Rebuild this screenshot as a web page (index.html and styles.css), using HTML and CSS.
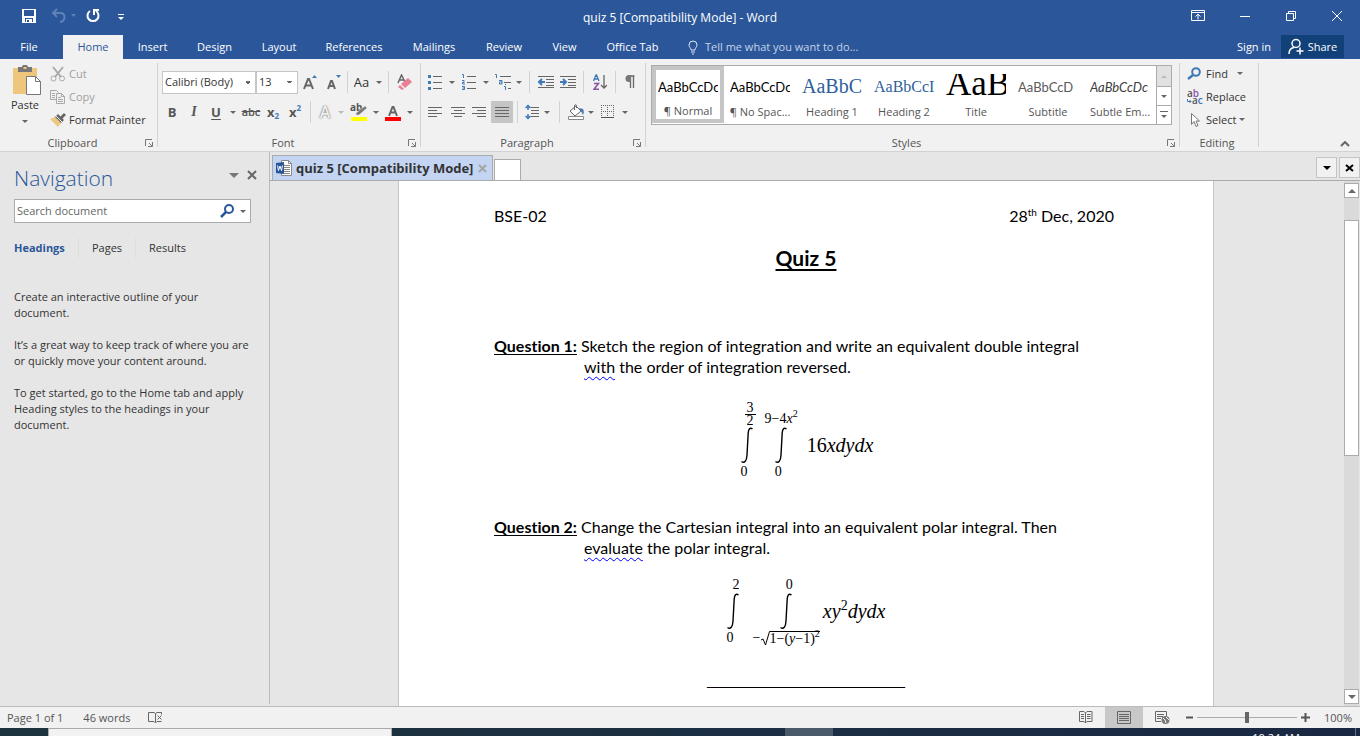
FILE: index.html
```html
<!DOCTYPE html>
<html lang="en">
<head>
<meta charset="utf-8">
<title>quiz 5 [Compatibility Mode] - Word</title>
<link rel="stylesheet" href="styles.css">
</head>
<body>
<header class="chrome">
  <div class="titlebar">
    <div class="quick">
      <button aria-label="Save"><svg width="16" height="16" viewBox="0 0 16 16"><path fill="#fff" fill-rule="evenodd" d="M1 1h14v14H1zM3 2v6h10V2zM4 10v4h1v-3h6v3h1v-4zM6 12v2h2v-2z"/></svg></button>
      <button class="faded" aria-label="Undo"><svg width="26" height="16" viewBox="0 0 26 16"><path d="M6 1 2 5l4 4M2 5h7c6 0 6 8 0 9" fill="none" stroke="#5f82b8" stroke-width="2"/><path d="M20 6h5l-2.500 3z" fill="#5f82b8"/></svg></button>
      <button aria-label="Repeat"><svg width="16" height="16" viewBox="0 0 16 16"><path d="M5 3a5.500 5.500 0 1 0 6 0M9 7V2h5" fill="none" stroke="#fff" stroke-width="2"/></svg></button>
      <button aria-label="Customize"><svg width="8" height="10" viewBox="0 0 8 10"><path d="M1 3.500h6" stroke="#fff"/><path d="M1 6h6L4 9z" fill="#fff"/></svg></button>
    </div>
    <h1 class="doc-title">quiz 5 [Compatibility Mode] - Word</h1>
    <div class="window-controls">
      <button aria-label="Ribbon display options"><svg width="14" height="12" viewBox="0 0 14 12"><path d="M.5.500h13v10H.500zM.500 2.500h13M7 9.500v-5M4.500 6.500 7 4.200l2.500 2.300" fill="none" stroke="#fff"/></svg></button>
      <button aria-label="Minimize"><svg width="12" height="12"><path d="M1 6.500h10" stroke="#fff"/></svg></button>
      <button aria-label="Restore"><svg width="12" height="12"><path d="M1.500 3.500h7v7h-7zM3.500 3.500v-2h7v7h-2" fill="none" stroke="#fff"/></svg></button>
      <button aria-label="Close"><svg width="12" height="12"><path d="m1 1 10 10M11 1 1 11" stroke="#fff"/></svg></button>
    </div>
  </div>
  <div class="menu">
    <nav class="tabs">
      <button class="file">File</button><button class="active">Home</button><button>Insert</button><button>Design</button><button>Layout</button><button>References</button><button>Mailings</button><button>Review</button><button>View</button><button>Office Tab</button>
    </nav>
    <button class="tell"><svg width="10" height="15" viewBox="0 0 10 15"><path d="M3 10c0-2-2-3-2-5a4 4 0 0 1 8 0c0 2-2 3-2 5zM3 12h4M4 14h2" fill="none" stroke="#dce5f2"/></svg>Tell me what you want to do...</button>
    <button class="sign">Sign in</button>
    <button class="share"><svg width="16" height="17" viewBox="0 0 16 17"><circle cx="8" cy="5.500" r="4" fill="none" stroke="#fff" stroke-width="1.500"/><path d="M1 16c0-4 2-6 5-6.500M8.500 13h7M12 9.500v7" fill="none" stroke="#fff" stroke-width="1.500"/></svg>Share</button>
  </div>
</header>

<section class="ribbon">
  <div class="group clipboard">
    <div class="clip-body">
      <button class="paste"><svg width="30" height="32" viewBox="0 0 30 32"><path d="M1 3h24v26H1z" fill="#eec67c"/><path d="M6 2h4c0-3 6-3 6 0h4v5H6z" fill="#777"/><path d="M11.500 2h3v2h-3z" fill="#eec67c"/><path d="M14.500 11.500h9l5 5v13h-14z" fill="#fff" stroke="#777"/><path d="M23.500 11.500v5h5" fill="none" stroke="#777"/></svg><span>Paste</span><i class="arrow"></i></button>
      <div class="clip-list">
        <button class="off"><svg width="16" height="16" viewBox="0 0 16 16"><path d="m3 1 8 10M13 1 5 11" stroke="#a9a9a9" stroke-width="2"/><circle cx="3.500" cy="12.500" r="2.500" fill="none" stroke="#a9a9a9"/><circle cx="12" cy="12.500" r="2.500" fill="none" stroke="#a9a9a9"/></svg>Cut</button>
        <button class="off"><svg width="16" height="16" viewBox="0 0 16 16"><path d="M6 10.500H.500v-9h6l2 2M2 4.500h3M2 6.500h3M2 8.500h3M6.500 4.500h5l3 3v7h-8zM11.500 4.500v3h3M8 8.500h3M8 10.500h5M8 12.500h5" fill="none" stroke="#a9a9a9"/></svg>Copy</button>
        <button><svg width="16" height="16" viewBox="0 0 16 16"><path d="m0 7 5-2 6 6-3 4z" fill="#eec67c"/><path d="m5 5 3-3 6 6-3 3z" fill="#666"/><path d="m10 5 4-4 2 2-4 4z" fill="#666"/><path d="m6 4 6 6" stroke="#f1f1f1"/></svg>Format Painter</button>
      </div>
    </div>
    <div class="caption">Clipboard<button class="launch" aria-label="Clipboard settings"><svg width="8" height="8"><path d="M.500 7V.500H7M4 4l3 3M7.500 3v4.500H3" fill="none" stroke="#777"/></svg></button></div>
  </div>

  <div class="group font">
    <div class="rows">
      <div class="row font-one">
        <select aria-label="Font"><option>Calibri (Body)</option></select>
        <select class="size" aria-label="Font size"><option>13</option></select>
        <button aria-label="Grow font"><svg width="14" height="16" viewBox="0 0 14 16"><path d="m1 15 4-10h1l4 10M2.500 11.500h6" fill="none" stroke="#666" stroke-width="2"/><path d="M9 4h5l-2.500-3z" fill="#3f7ab5"/></svg></button>
        <button aria-label="Shrink font"><svg width="14" height="16" viewBox="0 0 14 16"><path d="m1 15 3-8h1l3 8M2.500 12h5" fill="none" stroke="#666" stroke-width="2"/><path d="M9 1h5l-2.500 3z" fill="#3f7ab5"/></svg></button>
        <hr>
        <button class="case">Aa<i class="arrow"></i></button>
        <hr>
        <button aria-label="Clear formatting"><svg width="16" height="16" viewBox="0 0 16 16"><path d="m1 9 3.500-8L8 8M2 6h5" fill="none" stroke="#666" stroke-width="1.500"/><path d="m4 10 7-6 4 4-7 6z" fill="#e87f92"/><path d="m3 11 4 4-2 1-4-3z" fill="#e87f92"/></svg></button>
      </div>
      <div class="row font-two">
        <button class="b">B</button><button class="i">I</button><button class="u">U</button><button aria-label="Underline style"><i class="arrow"></i></button>
        <button class="strike">abc</button><button class="script">x<sub>2</sub></button><button class="script">x<sup>2</sup></button><hr>
        <button class="effects">A</button><button aria-label="Effects"><i class="arrow pale"></i></button>
        <button class="highlight" aria-label="Highlight"><svg width="18" height="18" viewBox="0 0 18 18"><text x="0" y="8" font-family="Open Sans" font-size="10" font-weight="700" fill="#555">ab</text><path d="m15 3 2 2-8 7H6v-2z" fill="#777" stroke="#eee" stroke-width=".5"/><path d="M1 14h16v4H1z" fill="#ff0"/></svg></button><button aria-label="Highlight colour"><i class="arrow"></i></button>
        <button aria-label="Font colour"><svg width="18" height="18" viewBox="0 0 18 18"><path d="m5 13 3.500-9h1L13 13M6.500 9.500h5" fill="none" stroke="#666" stroke-width="2"/><path d="M1 14h16v4H1z" fill="red"/></svg></button><button aria-label="Pick font colour"><i class="arrow"></i></button>
      </div>
    </div>
    <div class="caption">Font<button class="launch" aria-label="Font settings"><svg width="8" height="8"><path d="M.500 7V.500H7M4 4l3 3M7.500 3v4.500H3" fill="none" stroke="#777"/></svg></button></div>
  </div>

  <div class="group paragraph">
    <div class="rows">
      <div class="row para-one">
        <button aria-label="Bullets"><svg width="14" height="16"><path d="M5 2.500h9M5 8.500h9M5 14.500h9" stroke="#666"/><path d="M0 1h3v3H0zM0 7h3v3H0zM0 13h3v3H0z" fill="#3f7ab5"/></svg></button><button aria-label="Bullet style"><i class="arrow"></i></button>
        <button aria-label="Numbering"><svg width="16" height="16"><path d="M6 2.500h9M6 8.500h9M6 14.500h9" stroke="#666"/><path d="M1 .500h1.500V4M1 6.500h2v2H1.500v1.500H4M1 12.500h2.500v3H1M1.500 14h2" fill="none" stroke="#3f7ab5"/></svg></button><button aria-label="Number style"><i class="arrow"></i></button>
        <button aria-label="Multilevel list"><svg width="16" height="16"><path d="M5 2.500h11M9 8.500h7M13 14.500h3" stroke="#666"/><path d="M0 .500h1.500V4M4 6.500h3V10H4.500V8H7M10.500 10v1M9 12.500h1.500V16" fill="none" stroke="#3f7ab5"/></svg></button><button aria-label="List style"><i class="arrow"></i></button>
        <hr>
        <button aria-label="Decrease indent"><svg width="16" height="14"><path d="M0 1.500h16M8 4.500h8M8 7.500h8M8 10.500h8M0 12.500h16" stroke="#666"/><path d="M7 7H1m3-3L1 7l3 3" fill="none" stroke="#3f7ab5" stroke-width="2"/></svg></button>
        <button aria-label="Increase indent"><svg width="16" height="14"><path d="M0 1.500h16M8 4.500h8M8 7.500h8M8 10.500h8M0 12.500h16" stroke="#666"/><path d="M0 7h6M3 4l3 3-3 3" fill="none" stroke="#3f7ab5" stroke-width="2"/></svg></button>
        <hr>
        <button aria-label="Sort"><svg width="14" height="16"><path d="M.500 7 3 1h.500L6 7M1.500 5h4" fill="none" stroke="#3f7ab5" stroke-width="1.300"/><path d="M1 9.500h4.500L1 15.300h5" fill="none" stroke="#8c52a8" stroke-width="1.500"/><path d="M11 1v13M8 11l3 3 3-3" fill="none" stroke="#666" stroke-width="1.300"/></svg></button>
        <hr>
        <button aria-label="Show marks"><svg width="10" height="14"><path d="M5 1h4.500M5.500 1v12M8.500 1v12" stroke="#666" stroke-width="1.300"/><path d="M6 0H4a3.500 3.500 0 0 0 0 7h2z" fill="#777"/></svg></button>
      </div>
      <div class="row para-two">
        <button aria-label="Align left"><svg width="14" height="12"><path d="M0 1.500h14M0 4.500h9M0 7.500h14M0 10.500h9" stroke="#666"/></svg></button>
        <button aria-label="Center"><svg width="14" height="12"><path d="M0 1.500h14M3 4.500h8M0 7.500h14M3 10.500h8" stroke="#666"/></svg></button>
        <button aria-label="Align right"><svg width="14" height="12"><path d="M0 1.500h14M5 4.500h9M0 7.500h14M5 10.500h9" stroke="#666"/></svg></button>
        <button class="pressed" aria-label="Justify"><svg width="14" height="12"><path d="M0 1.500h14M0 4.500h14M0 7.500h14M0 10.500h14" stroke="#666"/></svg></button>
        <hr>
        <button aria-label="Line spacing"><svg width="14" height="16"><path d="M6 3.500h8M6 6.500h8M6 9.500h8M6 12.500h8" stroke="#666"/><path d="M3 1v5M.500 4 3 1.500 5.500 4M3 15v-5M.500 12 3 14.500 5.500 12" fill="none" stroke="#3f7ab5" stroke-width="1.500"/></svg></button><button aria-label="Spacing options"><i class="arrow"></i></button>
        <hr>
        <button aria-label="Shading"><svg width="17" height="16"><path d="m2 7 6-5 5 5-6 5z" fill="#fff" stroke="#666"/><path d="M6.500 6V1.500c0-1 2-1 2 0V4" fill="none" stroke="#666"/><path d="m11 4 4 1c1 2 1 4 0 6l-2-4z" fill="#3f7ab5"/><path d="M.500 12.500h15v3H.500z" fill="#fff" stroke="#888"/></svg></button><button aria-label="Shading colour"><i class="arrow"></i></button>
        <button aria-label="Borders"><svg width="14" height="14"><path d="M.500 0v13M6.500 0v13M12.500 0v13M0 .500h13M0 6.500h13" stroke="#666" stroke-dasharray="1 1"/><path d="M0 12.500h13" stroke="#555"/></svg></button><button aria-label="Border options"><i class="arrow"></i></button>
      </div>
    </div>
    <div class="caption">Paragraph<button class="launch" aria-label="Paragraph settings"><svg width="8" height="8"><path d="M.500 7V.500H7M4 4l3 3M7.500 3v4.500H3" fill="none" stroke="#777"/></svg></button></div>
  </div>

  <div class="group styles">
    <div class="gallery">
      <button class="style chosen"><span class="sample">AaBbCcDc</span><span>¶ Normal</span></button>
      <button class="style"><span class="sample">AaBbCcDc</span><span>¶ No Spac...</span></button>
      <button class="style"><span class="sample h1">AaBbC</span><span>Heading 1</span></button>
      <button class="style"><span class="sample h2">AaBbCcI</span><span>Heading 2</span></button>
      <button class="style"><span class="sample big">AaB</span><span>Title</span></button>
      <button class="style"><span class="sample sub">AaBbCcD</span><span>Subtitle</span></button>
      <button class="style"><span class="sample em">AaBbCcDc</span><span>Subtle Em...</span></button>
      <div class="gallery-nav">
        <button class="dim" aria-label="Previous styles"><i class="arrow up pale"></i></button>
        <button aria-label="Next styles"><i class="arrow"></i></button>
        <button aria-label="More styles"><svg width="8" height="8"><path d="M0 .500h8" stroke="#666"/><path d="M1 4h6L4 7z" fill="#666"/></svg></button>
      </div>
    </div>
    <div class="caption">Styles<button class="launch" aria-label="Style settings"><svg width="8" height="8"><path d="M.500 7V.500H7M4 4l3 3M7.500 3v4.500H3" fill="none" stroke="#777"/></svg></button></div>
  </div>

  <div class="group editing">
    <div class="edit-list">
      <button><svg width="16" height="14" viewBox="0 0 16 14"><circle cx="9" cy="5" r="3.800" fill="none" stroke="#3f7ab5" stroke-width="2"/><path d="m6 8-5 4" stroke="#3f7ab5" stroke-width="2.500"/></svg>Find<i class="arrow far"></i></button>
      <button><svg width="16" height="16" viewBox="0 0 16 16"><text y="8" font-family="Open Sans" font-size="10" font-weight="600" fill="#555">a<tspan fill="#8c52a8">b</tspan></text><text x="5" y="15" font-family="Open Sans" font-size="10" font-weight="600" fill="#555">a<tspan fill="#3f7ab5">c</tspan></text><path d="M.500 10v2.500H4M2.500 11 4 12.500 2.500 14" fill="none" stroke="#3f7ab5"/></svg>Replace</button>
      <button><svg width="16" height="16" viewBox="0 0 16 16"><path d="M4.500 1.500v11l2.500-3 2 5 2-1-2-4.500h3.500z" fill="#fff" stroke="#777"/></svg>Select<i class="arrow"></i></button>
    </div>
    <div class="caption">Editing</div>
  </div>
  <button class="collapse" aria-label="Collapse ribbon"><svg width="10" height="6"><path d="m1 5 4-4 4 4" fill="none" stroke="#666" stroke-width="2"/></svg></button>
</section>

<main class="work">
  <aside class="navpane">
    <div class="nav-head"><h2>Navigation</h2><button aria-label="Pane options"><svg width="10" height="5"><path d="M0 0h10L5 5z" fill="#777"/></svg></button><button aria-label="Close pane"><svg width="10" height="10"><path d="m1 1 8 8M9 1 1 9" stroke="#666" stroke-width="2"/></svg></button></div>
    <div class="search"><input type="text" aria-label="Search document" placeholder="Search document"><button aria-label="Search"><svg width="15" height="14" viewBox="0 0 15 14"><circle cx="9" cy="5" r="4" fill="none" stroke="#2b579a" stroke-width="2"/><path d="m6 8-5 5" stroke="#2b579a" stroke-width="2.500"/></svg></button><button aria-label="Search options"><i class="arrow"></i></button></div>
    <div class="nav-tabs"><button class="on">Headings</button><button>Pages</button><button>Results</button></div>
    <p>Create an interactive outline of your<br>document.</p>
    <p>It’s a great way to keep track of where you are<br>or quickly move your content around.</p>
    <p>To get started, go to the Home tab and apply<br>Heading styles to the headings in your<br>document.</p>
  </aside>
  <section class="editor">
    <div class="doc-tabs">
      <button class="doc-tab"><svg width="17" height="16" viewBox="0 0 17 16"><path d="M5.500.500h7l3 3v12h-10z" fill="#fff" stroke="#888"/><path d="M12.500.500v3h3M8 5.500h6M8 7.500h6M8 9.500h6M8 11.500h6M8 13.500h6" fill="none" stroke="#888"/><path d="m0 3 8-1v12l-8-1z" fill="#2b579a"/><path d="m1.500 5.500 1 5L4 6l1.500 4.500 1-5" fill="none" stroke="#fff"/></svg><span>quiz 5 [Compatibility Mode]</span><svg width="9" height="9"><path d="m1 1 7 7M8 1 1 8" stroke="#a5a5a5" stroke-width="2"/></svg></button>
      <button class="new-tab" aria-label="New document"></button>
      <span class="spacer"></span>
      <button class="square" aria-label="Document list"><svg width="8" height="4"><path d="M0 0h8L4 4z"/></svg></button>
      <button class="square" aria-label="Close document"><svg width="9" height="8"><path d="m1 1 7 6M8 1 1 7" stroke="#000" stroke-width="2"/></svg></button>
    </div>
    <div class="canvas">
      <article class="page">
        <div class="date-line"><span>BSE-02</span><span>28<sup>th</sup> Dec, 2020</span></div>
        <h3>Quiz 5</h3>
        <p class="question"><b>Question 1:</b> Sketch the region of integration and write an equivalent double integral</p>
        <p class="cont"><span class="wavy">with</span> the order of integration reversed.</p>
        <div class="equation first">
          <div class="integral"><span class="limit fraction"><span>3</span><span>2</span></span><svg width="12" height="37" viewBox="0 0 12 37"><path d="M11.500 2C9 0 7.500 2 7.200 6L6 28c-.3 6-2.500 8.500-5.500 6.500" fill="none" stroke="#000" stroke-width="1.400"/></svg><span class="limit low">0</span></div>
          <div class="integral"><span class="limit">9−4<i>x</i><sup>2</sup></span><svg width="12" height="37" viewBox="0 0 12 37"><path d="M11.500 2C9 0 7.500 2 7.200 6L6 28c-.3 6-2.500 8.500-5.500 6.500" fill="none" stroke="#000" stroke-width="1.400"/></svg><span class="limit low">0</span></div>
          <div class="integrand">16<i>xdydx</i></div>
        </div>
        <p class="question"><b>Question 2:</b> Change the Cartesian integral into an equivalent polar integral. Then</p>
        <p class="cont"><span class="wavy">evaluate</span> the polar integral.</p>
        <div class="equation second">
          <div class="integral"><span class="limit high">2</span><svg width="12" height="37" viewBox="0 0 12 37"><path d="M11.500 2C9 0 7.500 2 7.200 6L6 28c-.3 6-2.500 8.500-5.500 6.500" fill="none" stroke="#000" stroke-width="1.400"/></svg><span class="limit low">0</span></div>
          <div class="integral"><span class="limit high">0</span><svg width="12" height="37" viewBox="0 0 12 37"><path d="M11.500 2C9 0 7.500 2 7.200 6L6 28c-.3 6-2.500 8.500-5.500 6.500" fill="none" stroke="#000" stroke-width="1.400"/></svg><span class="limit root">−<svg width="9" height="15" viewBox="0 0 9 15"><path d="m0 9 2-1 2.500 6L8.500.500H9" fill="none" stroke="#000"/></svg><span class="radicand">1−(<i>y</i>−1)<sup>2</sup></span></span></div>
          <div class="integrand"><i>xy</i><sup>2</sup><i>dydx</i></div>
        </div>
        <div class="rule">______________________</div>
      </article>
      <div class="scrollbar"><button aria-label="Scroll up"><svg width="8" height="4"><path d="M0 4h8L4 0z" fill="#666"/></svg></button><span class="thumb"></span><button aria-label="Scroll down"><svg width="8" height="4"><path d="M0 0h8L4 4z" fill="#666"/></svg></button></div>
    </div>
  </section>
</main>

<footer class="status">
  <span class="pages">Page 1 of 1</span><span class="words">46 words</span>
  <button aria-label="Proofing"><svg width="15" height="13" viewBox="0 0 15 13"><path d="M7.500 11V2.500L6 1.500H.500v9H6l1.500 1.500L9 10.500h4.500M7.500 2.500 9 1.500h4.500v2M9.500 4.500l4 4M13.500 4.500l-4 4" fill="none" stroke="#666"/></svg></button>
  <span class="spacer"></span>
  <button class="view" aria-label="Read mode"><svg width="14" height="13" viewBox="0 0 14 13"><path d="M6.500 2 5 .500H.500v10H5L6.500 12 8 10.500h5V.500H8zM6.500 2v10M2 3.500h3M2 5.500h3M2 7.500h3M8 3.500h3.500M8 5.500h3.500M8 7.500h3.500" fill="none" stroke="#666"/></svg></button>
  <button class="view current" aria-label="Print layout"><svg width="14" height="13" viewBox="0 0 14 13"><path d="M.500.500h13v12H.500zM2 3.500h10M2 5.500h10M2 7.500h10M2 9.500h10" fill="none" stroke="#666"/></svg></button>
  <button class="view" aria-label="Web layout"><svg width="15" height="13" viewBox="0 0 15 13"><path d="M6 10.500H.500V.500h11V5M2 3.500h7M2 5.500h6M2 7.500h4" fill="none" stroke="#666"/><circle cx="10.500" cy="9" r="4" fill="#777"/><path d="m8 7 2 2 1 3M11 6l3 3" fill="none" stroke="#f1f1f1"/></svg></button>
  <button class="step" aria-label="Zoom out"><svg width="7" height="9"><path d="M0 4.500h7" stroke="#555" stroke-width="2"/></svg></button>
  <input type="range" aria-label="Zoom" min="0" max="100" value="50">
  <button class="step" aria-label="Zoom in"><svg width="9" height="9"><path d="M0 4.500h9M4.500 0v9" stroke="#555" stroke-width="2"/></svg></button>
  <span class="percent">100%</span>
</footer>
<div class="taskbar"><span class="task-search"></span><span class="task-active"></span><span class="clock">10:24 AM</span><span class="desktop-edge"></span></div>
</body>
</html>
```
FILE: styles.css
```css
:root {
  --blue: #2b579a;
  --panel: #f1f1f1;
  --gray: #e6e6e6;
  --line: #ababab;
  --soft: #d2d2d2;
}
* { box-sizing: border-box; }
body {
  margin: 0;
  height: 100vh;
  display: flex;
  flex-direction: column;
  overflow: hidden;
  font: 11px/16px "Open Sans", sans-serif;
  color: #333;
  background: var(--gray);
}
button {
  margin: 0;
  padding: 0;
  border: 0;
  background: none;
  font: inherit;
  color: inherit;
  display: flex;
  align-items: center;
  justify-content: center;
  white-space: nowrap;
}
svg { flex: none; display: block; }
h1, h2, h3, p { margin: 0; font-weight: 400; }
.spacer { flex: 1; }
.arrow {
  flex: none;
  border: 3px solid transparent;
  border-top-color: #666;
  border-bottom: 0;
}
.arrow.up { border-top: 0; border-bottom: 3px solid #666; }
.arrow.pale { border-top-color: #bbb; }
.arrow.up.pale { border-bottom-color: #bbb; }

/* Title bar and ribbon tabs */
.chrome { flex: none; background: var(--blue); color: #fff; }
.titlebar {
  display: grid;
  grid-template-columns: 1fr auto 1fr;
  height: 35px;
  align-items: center;
}
.quick { display: flex; align-items: center; gap: 22px; padding: 0 0 4px 21px; }
.quick button:nth-child(2) { margin-left: -8px; }
.quick button:nth-child(3) { margin-left: -14px; }
.quick button:nth-child(4) { margin-left: -6px; }
.doc-title { font-size: 12px; }
.window-controls { display: flex; justify-content: flex-end; gap: 34px; padding: 0 17px 4px 0; }
.menu { display: flex; height: 24px; }
.tabs { display: grid; grid-template-columns: 63px 60px 59px 65px 64px 86px 74px 66px 55px 81px; }
.tabs .file { padding-right: 5px; }
.tabs .active { background: var(--panel); color: var(--blue); }
.tell { gap: 7px; margin-left: 15px; color: #c5d3e8; }
.sign { margin-left: auto; }
.share { background: #124078; width: 63px; height: 23px; margin: 0 16px 0 10px; gap: 4px; }

/* Ribbon */
.ribbon {
  flex: none;
  display: flex;
  height: 93px;
  padding-top: 4px;
  background: var(--panel);
  border-bottom: 1px solid var(--soft);
}
.group { height: 84px; border-right: 1px solid var(--soft); display: flex; flex-direction: column; }
.clipboard { width: 158px; }
.font { width: 263px; }
.paragraph { width: 225px; }
.styles { width: 534px; }
.editing { width: 79px; }
.caption {
  margin-top: auto;
  height: 8px;
  padding-right: 4px;
  display: grid;
  grid-template-columns: 1fr 8px;
  align-items: center;
  text-align: center;
  color: #555;
  line-height: 8px;
}
.editing .caption { grid-template-columns: 1fr; }
.clip-body { display: flex; padding-top: 2px; }
.paste { width: 50px; flex-direction: column; justify-content: flex-start; height: 64px; }
.paste svg { margin-left: 4px; }
.paste .arrow { margin-top: 7px; }
.clip-list button, .edit-list button { height: 23px; gap: 3px; }
.clip-list { margin-top: -3px; }
.off { color: #a0a0a0; }
.rows { padding-top: 4px; }
.font .rows { padding-left: 4px; }
.row { display: grid; height: 30px; align-items: center; }
.row button { height: 22px; }
.row hr { width: 1px; height: 22px; margin: 0 auto; border: 0; background: var(--soft); }
.font-one { grid-template-columns: 94px 42px 24px 24px 3px 38px 3px 30px; }
.font-two { grid-template-columns: 20px 24px 20px 14px 22px 22px 22px 8px 22px 9px 27px 7px 27px 7px; color: #555; }
.para-one { grid-template-columns: 28px 6px 28px 6px 27px 6px 14px 20px 24px 6px 28px 3px 26px; }
.para-two { grid-template-columns: 28px 18px 24px 22px 8px 22px 8px 16px 18px 12px 22px 12px; }
.row select {
  height: 23px;
  appearance: none;
  border: 1px solid #c6c6c6;
  border-radius: 0;
  padding: 0 2px;
  font: inherit;
  color: #333;
  background:
    linear-gradient(45deg, transparent 50%, #666 50%) right 7px center / 3px 3px no-repeat,
    linear-gradient(-45deg, transparent 50%, #666 50%) right 4px center / 3px 3px no-repeat,
    #fff;
}
.case { gap: 7px; font-size: 13px; }
.b, .u { font-size: 13px; font-weight: 700; }
.u { text-decoration: underline; text-underline-offset: 2px; }
.i { font: italic 700 14px "Liberation Serif", serif; }
.strike { font-weight: 600; text-decoration: line-through; }
.script { font-size: 13px; font-weight: 700; }
.script sub, .script sup { font-size: 8px; line-height: 8px; color: #3f7ab5; }
.script sub { margin-top: 8px; }
.script sup { margin-bottom: 8px; }
.effects { font-size: 16px; font-weight: 600; color: #f1f1f1; text-shadow: 0 0 2px #777, 0 0 1px #777; }
.pressed { background: #c5c5c5; }
.gallery {
  display: grid;
  grid-template-columns: repeat(7, 72px) 15px;
  width: 521px;
  height: 60px;
  margin: 2px 0 0 5px;
  border: 1px solid var(--line);
  background: #fff;
}
.style { flex-direction: column; justify-content: flex-start; padding: 0 6px; color: #555; }
.chosen { border: 4px solid #c5c5c5; padding: 0 2px; height: 57px; }
.chosen .sample { margin-top: -4px; }
.sample {
  width: 60px;
  height: 38px;
  overflow: hidden;
  text-align: left;
  font: 13px/43px Lato, sans-serif;
  color: #000;
}
.sample.h1 { font: 20px/41px "Liberation Serif", serif; color: #2f5f9c; }
.sample.h2 { font: 16px/42px "Liberation Serif", serif; color: #2f5f9c; }
.sample.big { font: 35px/20px "Liberation Serif", serif; height: 24px; margin: 8px 0 6px; }
.sample.sub { color: #5a5a5a; }
.sample.em { font-style: italic; color: #404040; }
.gallery-nav { display: grid; grid-template-rows: 20px 19px 19px; border-left: 1px solid var(--line); }
.gallery-nav button + button { border-top: 1px solid var(--line); }
.dim { background: #e1e1e1; }
.edit-list { margin-top: -1px; }
.edit-list button { padding-left: 7px; }
.far { margin-left: 6px; }
.collapse { margin: auto 10px 4px auto; }

/* Navigation pane */
.work { flex: 1; min-height: 0; display: flex; }
.navpane { flex: none; width: 270px; border-right: 1px solid #bbb; padding: 13px 14px 0; margin-bottom: 2px; }
.nav-head { display: flex; align-items: center; gap: 8px; height: 26px; }
.nav-head h2 { flex: 1; font-size: 21px; line-height: 26px; font-weight: 300; color: var(--blue); }
.nav-head button { margin-bottom: 6px; }
.nav-head button:last-child { margin-right: -2px; }
.search { display: flex; width: 237px; height: 24px; margin-top: 8px; border: 1px solid var(--line); background: #fff; }
.search input { flex: 1; min-width: 0; border: 0; padding: 0 2px; font: inherit; background: none; }
.search input::placeholder { color: #666; }
.search button + button { width: 14px; margin-left: 1px; }
.nav-tabs { display: grid; grid-template-columns: 64px 57px 64px; height: 20px; margin: 15px 0 31px; }
.nav-tabs button + button { border-left: 1px solid #dedede; }
.nav-tabs .on { justify-content: flex-start; font-weight: 700; color: var(--blue); }
.navpane p { margin-bottom: 16px; white-space: nowrap; }

/* Document area */
.editor { flex: 1; min-width: 0; display: flex; flex-direction: column; }
.doc-tabs { flex: none; display: flex; align-items: flex-end; height: 29px; padding-left: 2px; border-bottom: 1px solid var(--line); }
.doc-tab { width: 221px; height: 25px; gap: 3px; padding-left: 3px; justify-content: flex-start; border: 1px solid var(--line); border-bottom: 0; background: #c3d5f3; font-weight: 700; font-size: 13px; color: #333; }
.doc-tab svg:last-child { margin-left: 2px; }
.new-tab { width: 27px; height: 21px; margin-left: 1px; border: 1px solid var(--line); border-bottom: 0; background: #fff; }
.square { width: 21px; height: 21px; margin: 0 0 2px 2px; border: 1px solid #c5c5c5; background: var(--panel); }
.canvas { flex: 1; min-height: 0; display: flex; overflow: hidden; }
.page {
  width: 816px;
  margin: 0 auto;
  border: 1px solid #c6c6c6;
  border-width: 0 1px;
  background: #fff;
  padding: 24px 95px 0;
  color: #000;
  font: 16px/21px Lato, sans-serif;
  font-variant-ligatures: none;
}
.date-line { display: flex; justify-content: space-between; padding-right: 4px; }
.page sup { font-size: 10px; line-height: 0; }
.page h3 { font-size: 21px; line-height: 30px; font-weight: 700; text-align: center; text-decoration: underline; text-underline-offset: 3px; margin: 17px 0 62px; }
.question { white-space: nowrap; }
.question b { text-decoration: underline; text-underline-offset: 2px; }
.cont { padding-left: 90px; }
.wavy { text-decoration: underline wavy #00f 1px; text-underline-offset: 3px; }
.equation { display: flex; justify-content: center; align-items: flex-end; font-family: "Liberation Serif", serif; }
.first { gap: 9px; margin: 23px 0 36px; height: 80px; }
.second { gap: 13px; margin: 17px 0 24px; height: 71px; }
.integral { display: flex; flex-direction: column; align-items: center; }
.limit { font-size: 14px; line-height: 16px; }
.low { margin-right: 6px; }
.high { margin-left: 6px; }
.fraction { display: flex; flex-direction: column; text-align: center; line-height: 12px; margin-left: 6px; width: 11px; }
.fraction span + span { border-top: 1px solid #000; }
.root { display: flex; align-items: center; }
.radicand { border-top: 1px solid #000; line-height: 14px; }
.integrand { font-size: 20px; line-height: 37px; margin-bottom: 16px; }
.integrand sup { font-size: 14px; }
.second .integrand { margin-left: -10px; }
.rule { text-align: center; font: 18px/21px "Liberation Serif", serif; }
.scrollbar { flex: none; display: flex; flex-direction: column; width: 15px; margin: 0 1px 0 2px; padding: 2px 0; background: #dadada; }
.scrollbar button { height: 15px; border: 1px solid var(--line); background: #fff; }
.thumb { height: 236px; margin: 22px 0 auto; border: 1px solid var(--line); background: #fff; }

/* Status bar and taskbar */
.status { flex: none; display: flex; align-items: center; height: 22px; background: var(--panel); border-top: 1px solid #bbb; color: #555; }
.pages { margin-left: 7px; }
.words { margin: 0 18px 0 20px; }
.view { width: 38px; height: 21px; }
.step { width: 10px; margin-left: 3px; }
.status input { width: 100px; height: 12px; margin: 0 0 0 3px; appearance: none; background: linear-gradient(#aaa, #aaa) center / 100% 1px no-repeat; }
.status input::-webkit-slider-thumb { appearance: none; width: 4px; height: 11px; background: #666; }
.current { background: #c8c8c8; }
.percent { margin: 0 8px 0 14px; }
.taskbar { flex: none; display: flex; height: 8px; overflow: hidden; background: linear-gradient(90deg, #1d333d, #1b2f42 50%, #1a2742); color: #fff; }
.task-search { width: 344px; margin-left: 48px; background: #f2f2f2; border: 1px solid #aaa; border-bottom: 0; }
.task-active { width: 48px; margin-left: 393px; background: #4a5a6a; }
.clock { margin: 2px 55px 0 auto; font-size: 11px; }
.desktop-edge { width: 5px; border-left: 1px solid #65738a; }
```
